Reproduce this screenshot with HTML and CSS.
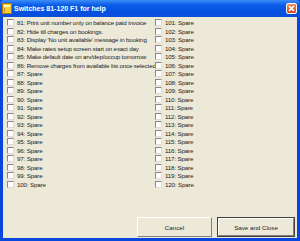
FILE: index.html
```html
<!DOCTYPE html>
<html lang="en">
<head>
    <meta charset="UTF-8">
    <title>Switches 81-120</title>
    <link rel="stylesheet" href="styles.css">
</head>
<body>
    <div class="window">
        <div class="titlebar">
            <svg class="appicon" width="10" height="11" viewBox="0 0 10 11">
                <rect x="0.5" y="0.5" width="9" height="10" fill="#f8d030" stroke="#b07810"/>
                <rect x="2" y="2" width="6" height="2" fill="#fff6c0"/>
                <rect x="2" y="5" width="1" height="4" fill="#c08818"/>
            </svg>
            <span class="title">Switches 81-120 F1 for help</span>
            <div class="closebtn">
                <svg width="7" height="7" viewBox="0 0 7 7">
                    <path d="M1 1 L6 6 M6 1 L1 6" stroke="#fff" stroke-width="1.6"/>
                </svg>
            </div>
        </div>
        <div class="client">
            <div class="columns">
                <ul class="col" id="left"></ul>
                <ul class="col" id="right"></ul>
            </div>
            <div class="buttons">
                <button class="btn cancel">Cancel</button>
                <button class="btn save">Save and Close</button>
            </div>
        </div>
    </div>
    <script>
        const labels = {
            81: "Print unit number only on balance paid invoice",
            82: "Hide till charges on bookings.",
            83: "Display 'No unit available' message in booking",
            84: "Make rates setup screen start on exact day",
            85: "Make default date on arv/dep/occup tomorrow",
            86: "Remove charges from available list once selected"
        };
        const left = document.getElementById("left");
        const right = document.getElementById("right");
        for (let n = 81; n <= 120; n++) {
            let li = document.createElement("li");
            li.className = "row";
            let box = document.createElement("span");
            box.className = "check";
            let txt = document.createElement("span");
            txt.className = "label";
            txt.textContent = n + ": " + (labels[n] || "Spare");
            li.appendChild(box);
            li.appendChild(txt);
            (n <= 100 ? left : right).appendChild(li);
        }
    </script>
</body>
</html>
```
FILE: styles.css
```css
body{
    margin: 0;
    font-family: "Liberation Sans", Arial, sans-serif;
}
.window{
    width: 300px;
    height: 241px;
    background: #0846dc;
    display: flex;
    flex-direction: column;
    box-sizing: border-box;
}
.titlebar{
    height: 17px;
    display: flex;
    align-items: center;
    padding: 0 3px 0 2px;
    background: linear-gradient(#3c8ef8, #0a5ce6 30%, #0550e0 70%, #0a4fd8);
    border-radius: 4px 4px 0 0;
}
.appicon{
    margin-right: 2px;
}
.title{
    color: #fff;
    font-weight: bold;
    font-size: 7px;
    flex: 1;
}
.closebtn{
    width: 11px;
    height: 11px;
    border-radius: 2px;
    border: 1px solid #fff;
    box-sizing: border-box;
    background: linear-gradient(#f08a60, #d8441c);
    display: flex;
    justify-content: center;
    align-items: center;
}
.client{
    flex: 1;
    margin: 0 3px 3px 3px;
    background: #ece9d8;
    display: flex;
    flex-direction: column;
}
.columns{
    display: grid;
    grid-template-columns: 148px 1fr;
    padding: 1.5px 0 0 4px;
}
.col{
    list-style: none;
    margin: 0;
    padding: 0;
}
.row{
    height: 8.5px;
    display: flex;
    align-items: center;
    white-space: nowrap;
}
.check{
    width: 5px;
    height: 5px;
    background: #fff;
    border-top: 1px solid #8a8a8a;
    border-left: 1px solid #8a8a8a;
    border-right: 1px solid #e0ded4;
    border-bottom: 1px solid #e0ded4;
    margin-right: 3px;
    flex: none;
}
.label{
    font-size: 6.2px;
    letter-spacing: -0.15px;
    color: #222;
}
.buttons{
    margin-top: auto;
    display: flex;
    justify-content: flex-end;
    gap: 5px;
    padding: 0 2px 1px 0;
}
.btn{
    height: 20px;
    font-family: "Liberation Sans", Arial, sans-serif;
    font-size: 6.2px;
    color: #222;
    background: #ece9d8;
    border: 1px solid;
    border-color: #fff #808080 #808080 #fff;
    padding: 0;
}
.cancel{
    width: 75px;
}
.save{
    width: 78px;
    outline: 1px solid #404040;
    outline-offset: -1px;
    border-width: 2px;
}
```
